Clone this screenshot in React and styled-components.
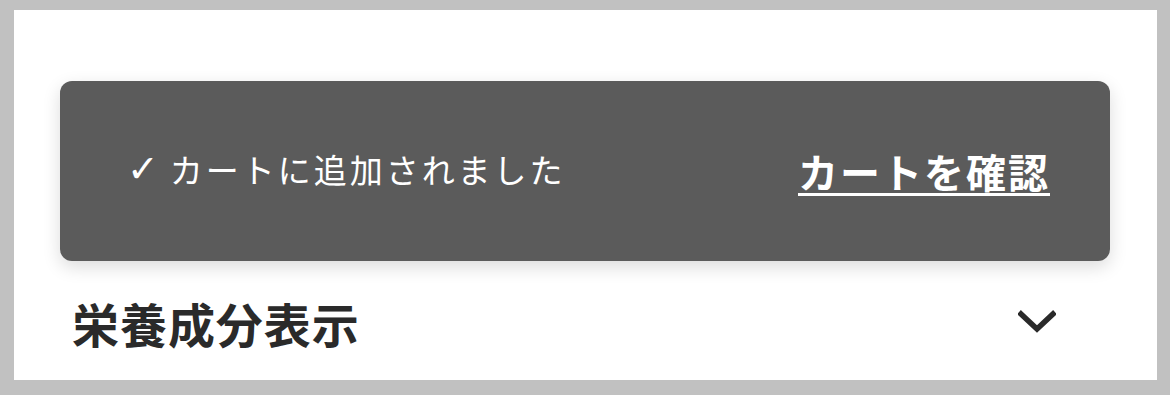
import React from 'react';
import styled, { createGlobalStyle } from 'styled-components';

const GlobalStyle = createGlobalStyle`
  html, body {
    margin: 0;
    padding: 0;
    background: #c1c1c1;
  }
  body {
    font-family: "Noto Sans CJK JP", "Noto Sans", sans-serif;
  }
`;

const Frame = styled.div`
  width: 1170px;
  height: 395px;
  box-sizing: border-box;
  padding: 10px 13px 15px 14px;
  background: #c1c1c1;
`;

const Panel = styled.div`
  height: 100%;
  background: #ffffff;
  padding: 71px 47px 0 46px;
  box-sizing: border-box;
  display: flex;
  flex-direction: column;
  overflow: hidden;
`;

const Toast = styled.div`
  flex-shrink: 0;
  height: 180px;
  background: #5b5b5b;
  border-radius: 12px;
  box-shadow: 0 6px 18px rgba(0, 0, 0, 0.14);
  display: flex;
  align-items: center;
  justify-content: space-between;
  padding: 0 62px 0 67px;
  box-sizing: border-box;
  color: #ffffff;
`;

const Message = styled.div`
  display: flex;
  align-items: center;
  gap: 11px;
  font-size: 33px;
  letter-spacing: 0.09em;
  margin-top: -4px;
`;

const Check = styled.span`
  font-family: "DejaVu Sans", sans-serif;
  font-size: 38px;
  line-height: 1;
  letter-spacing: 0;
  font-weight: 700;
`;

const Link = styled.a`
  color: #ffffff;
  font-size: 40px;
  font-weight: 700;
  letter-spacing: 0.05em;
  margin-right: -0.05em;
  text-decoration: underline;
  text-decoration-thickness: 3px;
  text-underline-offset: 5px;
  cursor: pointer;
`;

const SectionRow = styled.div`
  flex-shrink: 0;
  display: flex;
  align-items: center;
  justify-content: space-between;
  height: 122px;
  padding: 0 54px 0 12px;
`;

const Heading = styled.h2`
  margin: 0;
  font-size: 47px;
  font-weight: 700;
  color: #2a2a2a;
  letter-spacing: 0.02em;
`;

const Chevron = () => (
  <svg width="38" height="24" viewBox="0 0 38 24" fill="none">
    <path
      d="M3 4 L19 19 L35 4"
      stroke="#2a2a2a"
      strokeWidth="5.5"
      strokeLinecap="square"
      strokeLinejoin="miter"
    />
  </svg>
);

export default function App() {
  return (
    <>
      <GlobalStyle />
      <Frame>
        <Panel>
          <Toast>
            <Message>
              <Check>✓</Check>
              <span>カートに追加されました</span>
            </Message>
            <Link>カートを確認</Link>
          </Toast>
          <SectionRow>
            <Heading>栄養成分表示</Heading>
            <Chevron />
          </SectionRow>
        </Panel>
      </Frame>
    </>
  );
}
